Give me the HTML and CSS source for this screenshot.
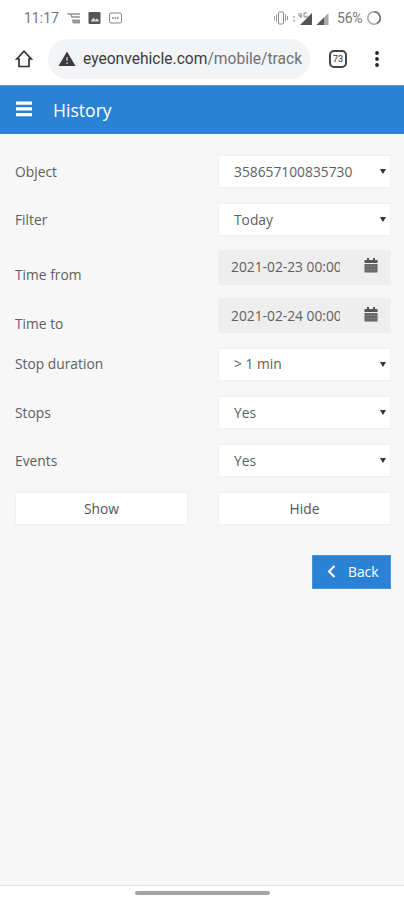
FILE: index.html
```html
<!DOCTYPE html>
<html lang="en">
<head>
<meta charset="utf-8">
<meta name="viewport" content="width=device-width, initial-scale=1">
<title>History</title>
<link rel="stylesheet" href="styles.css">
</head>
<body>
<div class="status">
  <span class="clock">11:17</span>
  <svg class="notifications" width="56" height="16" viewBox="0 0 56 16" fill="none">
    <path d="M.500 4h12.500M4 7h9M3.500 4l1.500 2.500" stroke="#909090" stroke-width="1.300"/>
    <path d="M4.500 9.500H13v4H6z" fill="#999"/>
    <rect x="21.500" y="2" width="12" height="12" rx="1.200" fill="#555"/>
    <path d="M23.500 11.500l3-4 2 2.400 1.400-1.600 2.500 3.200z" fill="#d8d8d8"/>
    <rect x="42.500" y="3" width="12" height="10" rx="1.500" stroke="#858585"/>
    <path d="M45 8h7" stroke="#858585" stroke-width="1.400" stroke-dasharray="1.700 .8"/>
  </svg>
  <div class="signals">
    <svg width="57" height="16" viewBox="0 0 57 16" fill="none">
      <rect x="4.500" y="2" width="5" height="12" rx="1" stroke="#888"/>
      <path d="M2.500 4.500v7M.500 6v4M11.500 4.500v7M13.500 6v4" stroke="#999"/>
      <path d="M20 6v2M20 9.500v2" stroke="#aaa" stroke-width="1.500"/>
      <path d="M38 3v12H26z" fill="#555"/>
      <path d="M25 3v3h3M27 3v5M33 3h-3v4h3V5.500" stroke="#888"/>
      <path d="M54.500 3v12h-12z" fill="#aaa"/>
      <path d="M50 7.500V15h-7.500z" fill="#555"/>
    </svg>
    <span>56%</span>
    <svg width="16" height="16" viewBox="0 0 16 16" fill="none">
      <circle cx="8" cy="8" r="6.200" stroke="#aaa" stroke-width="1.600"/>
      <path d="M8 1.800a6.200 6.200 0 0 1 3 11.600" stroke="#777" stroke-width="1.600"/>
    </svg>
  </div>
</div>
<div class="browser">
  <svg class="home" width="18" height="20" viewBox="0 0 18 20" fill="none" stroke="#333" stroke-width="1.700">
    <path d="M1.700 10L9 2.200l7.300 7.800h-2.300v7.500H4V10z"/>
  </svg>
  <div class="address">
    <svg width="18" height="16" viewBox="0 0 18 16">
      <path d="M9 .5L17.500 15H.5z" fill="#3a3a3c"/>
      <path d="M9 6v4M9 11.300v1.700" stroke="#b5b5b5" stroke-width="1.500"/>
    </svg>
    <span class="url">eyeonvehicle.com<span class="path">/mobile/track</span></span>
  </div>
  <span class="tabs">73</span>
  <svg class="more" width="6" height="18" viewBox="0 0 6 18" fill="#222">
    <circle cx="3" cy="3" r="1.900"/><circle cx="3" cy="9" r="1.900"/><circle cx="3" cy="15" r="1.900"/>
  </svg>
</div>
<header class="header">
  <svg width="16" height="16" viewBox="0 0 16 16" fill="#fff">
    <path d="M0 .500h16v3.200H0zM0 6.200h16v3.200H0zM0 12h16v3.200H0z"/>
  </svg>
  <h1>History</h1>
</header>
<main class="content">
  <div class="form">
    <span class="label">Object</span>
    <div class="select"><span>358657100835730</span><i class="caret"></i></div>
    <span class="label">Filter</span>
    <div class="select"><span>Today</span><i class="caret"></i></div>
    <span class="label low">Time from</span>
    <div class="date"><span class="value">2021-02-23 00:00</span>
      <svg width="14" height="15" viewBox="0 0 14 15"><path d="M.500 2h13v3H.500z" fill="#555"/><path d="M3 0h2v3H3zM9 0h2v3H9z" fill="#555"/><path d="M.500 6h13v8.500H.500z" fill="#666"/><path d="M.500 8.500h13M.500 11.500h13M4 6v8.500M7 6v8.500M10 6v8.500" stroke="#858585" stroke-width=".6"/></svg>
    </div>
    <span class="label low">Time to</span>
    <div class="date"><span class="value">2021-02-24 00:00</span>
      <svg width="14" height="15" viewBox="0 0 14 15"><path d="M.500 2h13v3H.500z" fill="#555"/><path d="M3 0h2v3H3zM9 0h2v3H9z" fill="#555"/><path d="M.500 6h13v8.500H.500z" fill="#666"/><path d="M.500 8.500h13M.500 11.500h13M4 6v8.500M7 6v8.500M10 6v8.500" stroke="#858585" stroke-width=".6"/></svg>
    </div>
    <span class="label">Stop duration</span>
    <div class="select"><span>&gt; 1 min</span><i class="caret"></i></div>
    <span class="label">Stops</span>
    <div class="select"><span>Yes</span><i class="caret"></i></div>
    <span class="label">Events</span>
    <div class="select"><span>Yes</span><i class="caret"></i></div>
    <button class="button">Show</button>
    <button class="button">Hide</button>
  </div>
  <button class="back">
    <svg width="9" height="13" viewBox="0 0 9 13" fill="none" stroke="#fff" stroke-width="2"><path d="M7.500 1L2 6.500 7.500 12"/></svg>
    <span>Back</span>
  </button>
</main>
<footer class="gesture"><span class="pill"></span></footer>
</body>
</html>
```
FILE: styles.css
```css
* { box-sizing: border-box; }
body {
  margin: 0;
  height: 900px;
  display: flex;
  flex-direction: column;
  overflow: hidden;
  background: #fff;
  color: #606060;
  font: 13.8px/20px "Open Sans", sans-serif;
}
svg { display: block; flex: none; }
.status {
  height: 35px;
  display: flex;
  align-items: center;
  padding: 1px 22px 0 24px;
  font: 14px/16px Roboto, sans-serif;
  color: #777;
}
.clock { width: 43px; }
.signals { margin-left: auto; display: flex; align-items: center; }
.signals span { width: 29px; margin: 0 0 0 6px; letter-spacing: -.2px; }
.browser {
  height: 50px;
  display: flex;
  align-items: center;
  padding: 0 24px 3px 15px;
}
.home { margin-right: 15px; }
.address {
  width: 262px;
  height: 40px;
  border-radius: 20px;
  background: #f2f4f6;
  display: flex;
  align-items: center;
  gap: 7px;
  padding: 0 0 0 10px;
}
.url {
  font: 15.6px/20px Roboto, sans-serif;
  color: #3c3c3e;
  white-space: nowrap;
}
.path { color: #707174; }
.tabs {
  width: 18px;
  height: 18px;
  margin-left: 19px;
  border: 2px solid #444;
  border-radius: 5px;
  font: 500 9px/14px Roboto, sans-serif;
  text-align: center;
  color: #555;
}
.more { margin-left: auto; }
.header {
  height: 49px;
  display: flex;
  align-items: center;
  gap: 21px;
  padding: 0 16px;
  background: #2b82d4;
  border-top: 1px solid #5e9fd8;
  color: #fff;
}
.header svg { margin-top: -3px; }
h1 { margin: -1px 0 0; font-size: 17.6px; line-height: 24px; font-weight: 400; }
.content {
  flex: 1;
  display: flex;
  flex-direction: column;
  padding: 13.5px 13px 0 15px;
  background: #f7f7f7;
}
.form {
  display: grid;
  grid-template-columns: 173px 173px;
  grid-auto-rows: 48.2px;
  column-gap: 30px;
  align-items: center;
}
.low { padding-top: 15px; }
.select, .date, .button {
  height: 33px;
  display: flex;
  align-items: center;
  background: #fff;
  border: 1px solid #f1f1f1;
}
.select { justify-content: space-between; padding: 0 4px 0 15px; }
.caret {
  border: 3px solid transparent;
  border-top: 5px solid #333;
  border-bottom: 0;
}
.date {
  height: 35px;
  margin-top: -1px;
  justify-content: space-between;
  padding: 0 12px;
  background: #eee;
  border-color: #efefef;
  border-radius: 2px;
}
.date svg { margin-top: -3px; }
.value { width: 109px; overflow: hidden; white-space: nowrap; }
button { font: inherit; }
.button { width: 173px; justify-content: center; padding: 0; color: #555; }
.back {
  width: 79px;
  height: 34px;
  margin-top: 21.5px;
  align-self: flex-end;
  display: flex;
  align-items: center;
  gap: 12px;
  padding: 0 0 0 14px;
  border: 1px solid #4a95da;
  background: #2b82d4;
  color: #fff;
}
.gesture {
  height: 15px;
  border-top: 1px solid #e3e3e3;
  display: flex;
  justify-content: center;
  padding-top: 5px;
}
.pill { width: 135px; height: 4px; border-radius: 2px; background: #a5a5a5; }
```
